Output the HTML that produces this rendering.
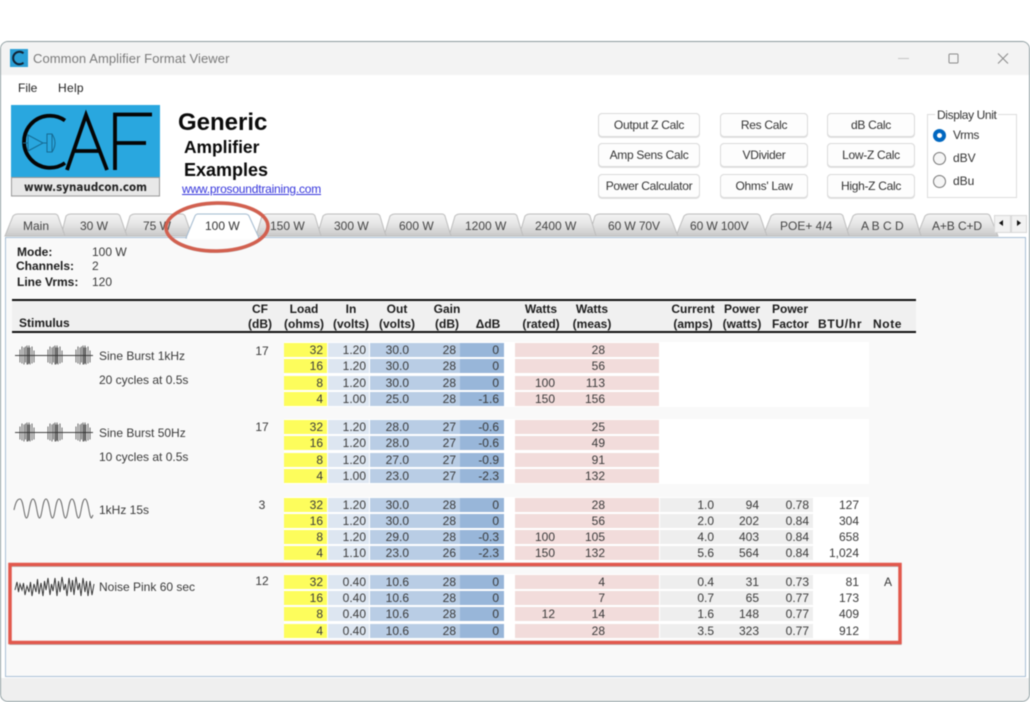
<!DOCTYPE html>
<html><head><meta charset="utf-8"><title>Common Amplifier Format Viewer</title>
<style>
html,body{margin:0;padding:0;background:#fff}
#p{position:relative;width:1030px;height:702px;overflow:hidden;background:#fff;font:12px/14px "Liberation Sans",sans-serif;color:#3a3a3a;filter:blur(.5px)}
#p div,#p span,#p a{position:absolute;white-space:nowrap}
.win{left:0;top:41px;width:1028px;height:659px;border:1px solid #8d9c9f;border-radius:8px;background:#fff;overflow:hidden}
.tb{left:0;top:0;width:1028px;height:33px;background:#f3f3f3}
.bot{left:0;top:636px;width:1028px;height:24px;background:#efefef}
.panel{left:5px;top:237px;width:1019px;height:438px;border:1.5px solid #a9c0d6;background:#f9f9f9}
.btn{height:22px;line-height:22px;text-align:center;border:1px solid #dadada;border-radius:4px;background:#fdfdfd;color:#333;letter-spacing:-.3px;box-sizing:content-box;box-shadow:0 1px 0 #e2e2e2}
.w1{left:598px;width:100px}.w2{left:720px;width:86px}.w3{left:827px;width:86px}
.hb{font-weight:bold;color:#1c1c1c;width:70px;text-align:center}
.lb{font-weight:bold;color:#1c1c1c}
.wb{left:284px;width:585px;height:65px;background:#fff}
.r{left:0;top:0;width:1030px;height:14px}
.r span{top:0;height:14px;text-align:right;box-sizing:border-box}
.a{left:284px;width:43px;background:#fdfd5c;padding-right:4px}
.b{left:328px;width:41px;background:#dde6f1;padding-right:3px}
.c{left:370px;width:45px;background:#b9cde5;padding-right:6px}
.d{left:415px;width:45px;background:#b9cde5;padding-right:4px}
.e{left:460px;width:44px;background:#98b6d9;padding-right:5px}
.f{left:515px;width:41px;background:#f2dcdb;padding-right:1px}
.g{left:556px;width:103px;background:#f2dcdb;padding-right:54px}
.h{left:660px;width:54px}
.bg{left:660px;width:153px;background:#eeeeee}
.i{left:714px;width:45px}
.j{left:759px;width:50px}
.k{left:809px;width:50px}
.m{left:880px;width:16px;text-align:center!important}
.t{left:99px;color:#3a3a3a}
.cf{left:248px;width:28px;text-align:center}
.rd{width:13px;height:13px;border:1px solid #777;border-radius:50%;left:933px;background:#f6f6f6;box-sizing:border-box}
</style></head>
<body><div id="p">
<div class="win"><div class="tb"></div><div class="bot"></div></div>
<div class="panel"></div>

<!-- title bar -->
<svg style="position:absolute;left:10px;top:49px" width="18" height="18" viewBox="0 0 18 18"><rect width="18" height="18" fill="#2a9fd6"/><path d="M13.500 4.200A6.300 6.300 0 1 0 13.500 13.800" fill="none" stroke="#123" stroke-width="2"/></svg>
<div style="left:33px;top:51px;font-size:13px;line-height:15px;color:#7a7a7a;letter-spacing:.08px">Common Amplifier Format Viewer</div>
<svg style="position:absolute;left:895px;top:50px" width="120" height="16" viewBox="0 0 120 16" fill="none" stroke="#8a8a8a"><path d="M3 8.500H14" stroke="#c4c4c4"/><rect x="54" y="4" width="9" height="9" rx="1"/><path d="M103 3.500L113 13.500M113 3.500L103 13.500"/></svg>
<div style="left:18px;top:81px;color:#222">File</div>
<div style="left:58px;top:81px;color:#222;letter-spacing:.3px">Help</div>

<!-- logo -->
<svg style="position:absolute;left:11px;top:105px" width="150" height="93" viewBox="11 105 150 93">
<rect x="11" y="105" width="149" height="73" fill="#29a7df"/>
<rect x="11.500" y="177.500" width="148" height="18.500" fill="#e8e8e8" stroke="#999"/>
<g fill="none" stroke="#050505" stroke-width="3.800">
<path d="M65 120.500A26 26 0 1 0 65 163"/>
<path d="M67 170L86 115L107 170M73 151H100"/>
<path d="M115 170V114.500H152M115 143H146"/>
</g>
<g fill="none" stroke="#156a93" stroke-width="1">
<path d="M28 135V151L43 143ZM23 143H28M43 143H47M47 134H52V152H47ZM52 134Q58 143 52 152"/>
</g>
<text x="24" y="191" font-family="DejaVu Sans" font-weight="bold" font-size="11.500" textLength="123" lengthAdjust="spacingAndGlyphs" fill="#222">www.synaudcon.com</text>
</svg>

<div style="left:178px;top:109px;font-size:24px;line-height:27px;font-weight:bold;color:#0a0a0a">Generic</div>
<div style="left:184px;top:137px;font-size:17.400px;line-height:20px;font-weight:bold;color:#0a0a0a">Amplifier</div>
<div style="left:184px;top:160px;font-size:18px;line-height:20px;font-weight:bold;color:#0a0a0a">Examples</div>
<a style="left:182px;top:182px;color:#3535dc;text-decoration:underline;letter-spacing:-.21px">www.prosoundtraining.com</a>

<!-- buttons -->
<div class="btn w1" style="top:113px">Output Z Calc</div>
<div class="btn w1" style="top:143px">Amp Sens Calc</div>
<div class="btn w1" style="top:174px">Power Calculator</div>
<div class="btn w2" style="top:113px">Res Calc</div>
<div class="btn w2" style="top:143px">VDivider</div>
<div class="btn w2" style="top:174px">Ohms' Law</div>
<div class="btn w3" style="top:113px">dB Calc</div>
<div class="btn w3" style="top:143px">Low-Z Calc</div>
<div class="btn w3" style="top:174px">High-Z Calc</div>

<!-- display unit -->
<div style="left:927px;top:114px;width:88px;height:82px;border:1px solid #dcdcdc"></div>
<div style="left:935px;top:108px;background:#fff;padding:0 2px;color:#333;letter-spacing:-.38px">Display Unit</div>
<div class="rd" style="top:129px;border:4px solid #0067c0;background:#fff"></div>
<div class="rd" style="top:152px"></div>
<div class="rd" style="top:175px"></div>
<div style="left:953px;top:128px;color:#333;letter-spacing:-.4px">Vrms</div>
<div style="left:953px;top:151px;color:#333">dBV</div>
<div style="left:953px;top:174px;color:#333">dBu</div>

<!-- tabs -->
<svg style="position:absolute;left:0;top:205px" width="1030" height="40" viewBox="0 205 1030 40">
<defs><linearGradient id="tg" x1="0" y1="0" x2="0" y2="1"><stop offset="0" stop-color="#f3f3f3"/><stop offset=".45" stop-color="#e6e6e6"/><stop offset="1" stop-color="#c9c9c9"/></linearGradient></defs>
<g fill="url(#tg)" stroke="#bdbdbd" stroke-width="1">
<path d="M998 236L990 216Q989 214 987 214H930Q927 214 925 216L917 236Z"/>
<path d="M921 236L915 216Q914 214 912 214H858Q855 214 853 216L845 236Z"/>
<path d="M849 236L843 216Q842 214 840 214H776Q773 214 771 216L763 236Z"/>
<path d="M767 236L760 216Q759 214 757 214H689Q686 214 684 216L676 236Z"/>
<path d="M678 236L670 216Q669 214 667 214H600Q597 214 595 216L589 236Z"/>
<path d="M596 236L590 216Q589 214 587 214H530Q527 214 525 216L519 236Z"/>
<path d="M523 236L517 216Q516 214 514 214H460Q457 214 455 216L449 236Z"/>
<path d="M451 236L445 216Q444 214 442 214H395Q392 214 390 216L384 236Z"/>
<path d="M386 236L380 216Q379 214 377 214H328Q325 214 323 216L317 236Z"/>
<path d="M321 236L315 216Q314 214 312 214H267Q264 214 262 216L256 236Z"/>
<path d="M192 236L185 216Q184 214 182 214H135Q132 214 130 216L124 236Z"/>
<path d="M127 236L120 216Q119 214 117 214H71Q68 214 66 216L61 236Z"/>
<path d="M65 236L58 216Q57 214 55 214H18Q15 214 13 216L5 236Z"/>
</g>
<path d="M186 238L195 216Q196 214 198 214H245Q248 214 249 216L259 238Z" fill="#fff" stroke="#a3bacf" stroke-width="1"/>
<path d="M187 238.500H258" stroke="#fff" stroke-width="2"/>
<g stroke="#d8d8d8" fill="#f2f2f2"><rect x="994.500" y="215.500" width="16" height="17"/><rect x="1011.500" y="215.500" width="15" height="17"/></g>
<path d="M1003 220V226L999 223ZM1017 220V226L1021 223Z" fill="#111"/>
</svg>
<div style="left:23px;top:219px;color:#444">Main</div>
<div style="left:80px;top:219px;color:#444">30 W</div>
<div style="left:143px;top:219px;color:#444">75 W</div>
<div style="left:205px;top:219px;color:#333">100 W</div>
<div style="left:270px;top:219px;color:#444">150 W</div>
<div style="left:334px;top:219px;color:#444">300 W</div>
<div style="left:399px;top:219px;color:#444">600 W</div>
<div style="left:465px;top:219px;color:#444">1200 W</div>
<div style="left:535px;top:219px;color:#444">2400 W</div>
<div style="left:608px;top:219px;color:#444;letter-spacing:-.1px">60 W 70V</div>
<div style="left:690px;top:219px;color:#444;letter-spacing:-.1px">60 W 100V</div>
<div style="left:780px;top:219px;color:#444">POE+ 4/4</div>
<div style="left:861px;top:219px;color:#444">A B C D</div>
<div style="left:932px;top:219px;color:#444;letter-spacing:-.1px">A+B C+D</div>

<!-- info -->
<div class="lb" style="left:17px;top:245px">Mode:</div>
<div class="lb" style="left:16px;top:259px">Channels:</div>
<div class="lb" style="left:17px;top:275px">Line Vrms:</div>
<div style="left:92px;top:245px">100 W</div>
<div style="left:92px;top:259px">2</div>
<div style="left:92px;top:275px">120</div>

<!-- header -->
<div style="left:12px;top:299px;width:904px;height:34px;background:#f0f0f0;border-top:2px solid #111;border-bottom:2px solid #111;box-sizing:border-box"></div>
<div class="lb" style="left:19px;top:316px">Stimulus</div>
<div class="hb" style="left:225px;top:302px">CF</div><div class="hb" style="left:225px;top:317px">(dB)</div>
<div class="hb" style="left:269px;top:302px">Load</div><div class="hb" style="left:269px;top:317px">(ohms)</div>
<div class="hb" style="left:316px;top:302px">In</div><div class="hb" style="left:316px;top:317px">(volts)</div>
<div class="hb" style="left:362px;top:302px">Out</div><div class="hb" style="left:362px;top:317px">(volts)</div>
<div class="hb" style="left:412px;top:302px">Gain</div><div class="hb" style="left:412px;top:317px">(dB)</div>
<div class="hb" style="left:453px;top:317px">ΔdB</div>
<div class="hb" style="left:506px;top:302px">Watts</div><div class="hb" style="left:506px;top:317px">(rated)</div>
<div class="hb" style="left:557px;top:302px">Watts</div><div class="hb" style="left:557px;top:317px">(meas)</div>
<div class="hb" style="left:658px;top:302px">Current</div><div class="hb" style="left:658px;top:317px">(amps)</div>
<div class="hb" style="left:707px;top:302px">Power</div><div class="hb" style="left:707px;top:317px">(watts)</div>
<div class="lb" style="left:772px;top:302px">Power</div><div class="lb" style="left:772px;top:317px">Factor</div>
<div class="lb" style="left:818px;top:317px;letter-spacing:.7px">BTU/hr</div>
<div class="lb" style="left:873px;top:317px;letter-spacing:.6px">Note</div>

<!-- white blocks -->
<div class="wb" style="top:342px"></div>
<div class="wb" style="top:419px"></div>
<div class="wb" style="top:496.500px"></div>
<div class="wb" style="top:573.700px"></div>

<!-- group 1 -->
<div class="r" style="top:343px"><span class="a">32</span><span class="b">1.20</span><span class="c">30.0</span><span class="d">28</span><span class="e">0</span><span class="f"></span><span class="g">28</span></div>
<div class="r" style="top:359.300px"><span class="a">16</span><span class="b">1.20</span><span class="c">30.0</span><span class="d">28</span><span class="e">0</span><span class="f"></span><span class="g">56</span></div>
<div class="r" style="top:375.600px"><span class="a">8</span><span class="b">1.20</span><span class="c">30.0</span><span class="d">28</span><span class="e">0</span><span class="f">100</span><span class="g">113</span></div>
<div class="r" style="top:391.900px"><span class="a">4</span><span class="b">1.00</span><span class="c">25.0</span><span class="d">28</span><span class="e">-1.6</span><span class="f">150</span><span class="g">156</span></div>
<!-- group 2 -->
<div class="r" style="top:420px"><span class="a">32</span><span class="b">1.20</span><span class="c">28.0</span><span class="d">27</span><span class="e">-0.6</span><span class="f"></span><span class="g">25</span></div>
<div class="r" style="top:436.300px"><span class="a">16</span><span class="b">1.20</span><span class="c">28.0</span><span class="d">27</span><span class="e">-0.6</span><span class="f"></span><span class="g">49</span></div>
<div class="r" style="top:452.600px"><span class="a">8</span><span class="b">1.20</span><span class="c">27.0</span><span class="d">27</span><span class="e">-0.9</span><span class="f"></span><span class="g">91</span></div>
<div class="r" style="top:468.900px"><span class="a">4</span><span class="b">1.00</span><span class="c">23.0</span><span class="d">27</span><span class="e">-2.3</span><span class="f"></span><span class="g">132</span></div>
<!-- group 3 -->
<div class="r" style="top:497.500px"><span class="a">32</span><span class="b">1.20</span><span class="c">30.0</span><span class="d">28</span><span class="e">0</span><span class="f"></span><span class="g">28</span><span class="bg"></span><span class="h">1.0</span><span class="i">94</span><span class="j">0.78</span><span class="k">127</span></div>
<div class="r" style="top:513.800px"><span class="a">16</span><span class="b">1.20</span><span class="c">30.0</span><span class="d">28</span><span class="e">0</span><span class="f"></span><span class="g">56</span><span class="bg"></span><span class="h">2.0</span><span class="i">202</span><span class="j">0.84</span><span class="k">304</span></div>
<div class="r" style="top:530.100px"><span class="a">8</span><span class="b">1.20</span><span class="c">29.0</span><span class="d">28</span><span class="e">-0.3</span><span class="f">100</span><span class="g">105</span><span class="bg"></span><span class="h">4.0</span><span class="i">403</span><span class="j">0.84</span><span class="k">658</span></div>
<div class="r" style="top:546.400px"><span class="a">4</span><span class="b">1.10</span><span class="c">23.0</span><span class="d">26</span><span class="e">-2.3</span><span class="f">150</span><span class="g">132</span><span class="bg"></span><span class="h">5.6</span><span class="i">564</span><span class="j">0.84</span><span class="k">1,024</span></div>
<!-- group 4 -->
<div class="r" style="top:574.700px"><span class="a">32</span><span class="b">0.40</span><span class="c">10.6</span><span class="d">28</span><span class="e">0</span><span class="f"></span><span class="g">4</span><span class="bg"></span><span class="h">0.4</span><span class="i">31</span><span class="j">0.73</span><span class="k">81</span><span class="m">A</span></div>
<div class="r" style="top:591px"><span class="a">16</span><span class="b">0.40</span><span class="c">10.6</span><span class="d">28</span><span class="e">0</span><span class="f"></span><span class="g">7</span><span class="bg"></span><span class="h">0.7</span><span class="i">65</span><span class="j">0.77</span><span class="k">173</span></div>
<div class="r" style="top:607.300px"><span class="a">8</span><span class="b">0.40</span><span class="c">10.6</span><span class="d">28</span><span class="e">0</span><span class="f">12</span><span class="g">14</span><span class="bg"></span><span class="h">1.6</span><span class="i">148</span><span class="j">0.77</span><span class="k">409</span></div>
<div class="r" style="top:623.600px"><span class="a">4</span><span class="b">0.40</span><span class="c">10.6</span><span class="d">28</span><span class="e">0</span><span class="f"></span><span class="g">28</span><span class="bg"></span><span class="h">3.5</span><span class="i">323</span><span class="j">0.77</span><span class="k">912</span></div>

<!-- stimulus text -->
<div class="t" style="top:349px">Sine Burst 1kHz</div>
<div class="t" style="top:373px">20 cycles at 0.5s</div>
<div class="t" style="top:426px">Sine Burst 50Hz</div>
<div class="t" style="top:450px">10 cycles at 0.5s</div>
<div class="t" style="top:503px">1kHz 15s</div>
<div class="t" style="top:580px">Noise Pink 60 sec</div>
<div class="cf" style="top:344px">17</div>
<div class="cf" style="top:420px">17</div>
<div class="cf" style="top:498px">3</div>
<div class="cf" style="top:574px">12</div>

<!-- waveforms -->
<svg style="position:absolute;left:0;top:340px" width="100" height="270" viewBox="0 340 100 270" fill="none">
<defs><g id="bu" stroke="#333" stroke-width=".7"><path d="M0-6V7M2-9V8M4-8V9M5.500-9V7M7-10V9M8-8V9M9-10V8M10-8V9M12-9V8M14-5V7"/></g></defs>
<path d="M15 355.500H93M15 432.500H93" stroke="#444" stroke-width=".9"/>
<use href="#bu" x="20" y="355.500"/><use href="#bu" x="48" y="355.500"/><use href="#bu" x="76" y="355.500"/>
<use href="#bu" x="20" y="432.500"/><use href="#bu" x="48" y="432.500"/><use href="#bu" x="76" y="432.500"/>
<path d="M14 510C15.500 503 17 499 20 499C23.500 499 24 518 26.500 518C29 518 29.500 499 33 499C36.500 499 37 518 39.500 518C42 518 42.500 499 46 499C49.500 499 50 518 52.500 518C55 518 55.500 499 59 499C62.500 499 63 518 65.500 518C68 518 68.500 499 72 499C75.500 499 76 518 78.500 518C81 518 81.500 499 85 499C88.500 499 89 518 91.500 518L93 515" stroke="#666" stroke-width="1"/>
<path d="M15 590L17 582L18.500 592L20 584L22 590L23.500 583L25 595L27 586L29 592L30.500 582L32 596L34 584L36 592L37.500 579L39 594L41 583L43 596L44.500 581L46 590L48 578L50 595L51.500 584L53 591L55 578L57 596L58.500 581L60 592L62 577L64 590L65.500 584L67 596L69 578L71 592L72.500 580L74 595L76 577L78 590L79.500 583L81 596L83 578L85 592L86.500 581L88 596L90 581L92 595L94 584" stroke="#2b2b2b" stroke-width=".9"/>
</svg>

<!-- annotations -->
<svg style="position:absolute;left:0;top:0;pointer-events:none" width="1030" height="702" viewBox="0 0 1030 702" fill="none">
<rect x="10" y="564.500" width="890" height="78" stroke="#b9b9b9" stroke-width="2" transform="translate(.5 1.500)"/>
<rect x="10" y="564.500" width="890" height="78" stroke="#e2584d" stroke-width="3.500"/>
<ellipse cx="217" cy="228" rx="51" ry="24" stroke="#bbb" stroke-width="2" transform="rotate(-1 217 228)"/>
<ellipse cx="217" cy="227" rx="51" ry="24" stroke="#d2604f" stroke-width="3.500" transform="rotate(-1 217 227)"/>
</svg>
</div></body></html>
